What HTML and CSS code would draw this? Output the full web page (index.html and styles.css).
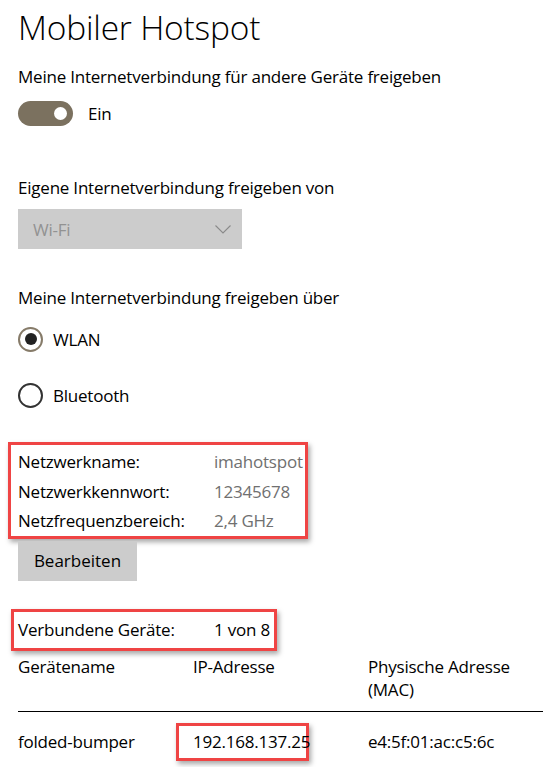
FILE: index.html
```html
<!DOCTYPE html>
<html lang="de">
<head>
<meta charset="utf-8">
<title>Mobiler Hotspot</title>
<link rel="stylesheet" href="styles.css">
</head>
<body>
<main class="page">
  <h1 class="title">Mobiler Hotspot</h1>

  <p class="label label-share">Meine Internetverbindung für andere Geräte freigeben</p>
  <div class="toggle-row">
    <span class="toggle"><span class="knob"></span></span>
    <span class="toggle-text">Ein</span>
  </div>

  <p class="label label-from">Eigene Internetverbindung freigeben von</p>
  <div class="dropdown">
    <span class="dropdown-text">Wi-Fi</span>
    <svg class="chevron" width="16" height="9" viewBox="0 0 16 9"><path d="M0.5 0.5 L8 8 L15.5 0.5" fill="none" stroke="#8a8a8a" stroke-width="1.1"/></svg>
  </div>

  <p class="label label-over">Meine Internetverbindung freigeben über</p>
  <div class="radio-row radio-first">
    <span class="radio radio-on"><span class="dot"></span></span>
    <span class="radio-text">WLAN</span>
  </div>
  <div class="radio-row radio-second">
    <span class="radio"></span>
    <span class="radio-text">Bluetooth</span>
  </div>

  <div class="redbox info-box">
    <div class="info-row"><span class="key">Netzwerkname:</span><span class="val">imahotspot</span></div>
    <div class="info-row"><span class="key">Netzwerkkennwort:</span><span class="val">12345678</span></div>
    <div class="info-row"><span class="key">Netzfrequenzbereich:</span><span class="val">2,4 GHz</span></div>
  </div>

  <button class="btn" type="button">Bearbeiten</button>

  <div class="redbox count-box">
    <span class="key">Verbundene Geräte:</span><span class="count">1 von 8</span>
  </div>

  <div class="table">
    <div class="thead">
      <span class="col">Gerätename</span>
      <span class="col">IP-Adresse</span>
      <span class="col">Physische Adresse<br>(MAC)</span>
    </div>
    <div class="trow">
      <span class="col">folded-bumper</span>
      <span class="col"><span class="redbox ip-box">192.168.137.25</span></span>
      <span class="col">e4:5f:01:ac:c5:6c</span>
    </div>
  </div>
</main>
</body>
</html>
```
FILE: styles.css
```css
* { box-sizing: border-box; }
html, body { margin: 0; padding: 0; background: #fff; }
body {
  font-family: "Segoe UI", "Open Sans", "Noto Sans", sans-serif;
  color: #000;
  font-size: 17px;
  letter-spacing: -0.22px;
}
.page { padding: 0 0 0 18px; width: 557px; }

.title {
  margin: 0;
  padding-top: 4px;
  font-size: 33.5px;
  font-weight: 300;
  line-height: 46px;
  letter-spacing: -0.2px;
}

.label { margin: 0; line-height: 26px; height: 26px; }
.label-share { margin-top: 14px; }
.label-from { margin-top: 49px; }
.label-over { margin-top: 36px; }

.toggle-row {
  margin-top: 11px;
  height: 25px;
  display: flex;
  align-items: center;
}
.toggle {
  width: 55px;
  height: 25px;
  border-radius: 13px;
  background: #7b715f;
  display: flex;
  align-items: center;
  justify-content: flex-end;
  padding-right: 6px;
}
.knob {
  width: 13px;
  height: 13px;
  border-radius: 50%;
  background: #fff;
}
.toggle-text { margin-left: 15px; }

.dropdown {
  margin-top: 8px;
  width: 224px;
  height: 40px;
  background: #cccccc;
  display: flex;
  align-items: center;
  justify-content: space-between;
  padding: 0 11px 0 15px;
}
.dropdown-text { color: #929292; }
.chevron { display: block; }

.radio-row {
  height: 26px;
  display: flex;
  align-items: center;
}
.radio-first { margin-top: 15px; }
.radio-second { margin-top: 30px; }
.radio {
  width: 25px;
  height: 25px;
  border-radius: 50%;
  border: 2.5px solid #333;
  display: flex;
  align-items: center;
  justify-content: center;
}
.radio-on { border-color: #867b69; }
.dot {
  width: 12px;
  height: 12px;
  border-radius: 50%;
  background: #222;
}
.radio-text { margin-left: 10px; }

.redbox {
  border: 3px solid #ef4444;
  box-shadow: 2px 3px 5px rgba(0, 0, 0, 0.35);
  background: #fff;
}

.info-box {
  margin-top: 34px;
  margin-left: -10px;
  width: 300px;
  padding: 2px 0 0 7px;
}
.info-row { display: flex; height: 29.5px; align-items: center; }
.key { width: 196px; flex: none; }
.val { color: #707070; }

.btn {
  display: block;
  margin: 2px 0 0 0;
  width: 119px;
  height: 40px;
  border: 0;
  background: #cccccc;
  font: inherit;
  color: #000;
  padding: 0;
}

.count-box {
  margin-top: 28px;
  margin-left: -7px;
  width: 266px;
  height: 42px;
  display: flex;
  align-items: center;
  padding-left: 4px;
}

.table { width: 525px; margin-top: 4px; }
.thead {
  display: flex;
  line-height: 23px;
  padding-bottom: 10px;
  border-bottom: 1px solid #000;
}
.trow {
  display: flex;
  align-items: center;
  height: 50px;
  margin-top: 5px;
}
.col { width: 175px; flex: none; }
.ip-box {
  display: inline-block;
  margin-left: -17px;
  width: 133px;
  padding: 3px 0 3px 14px;
  line-height: 26px;
}
```
